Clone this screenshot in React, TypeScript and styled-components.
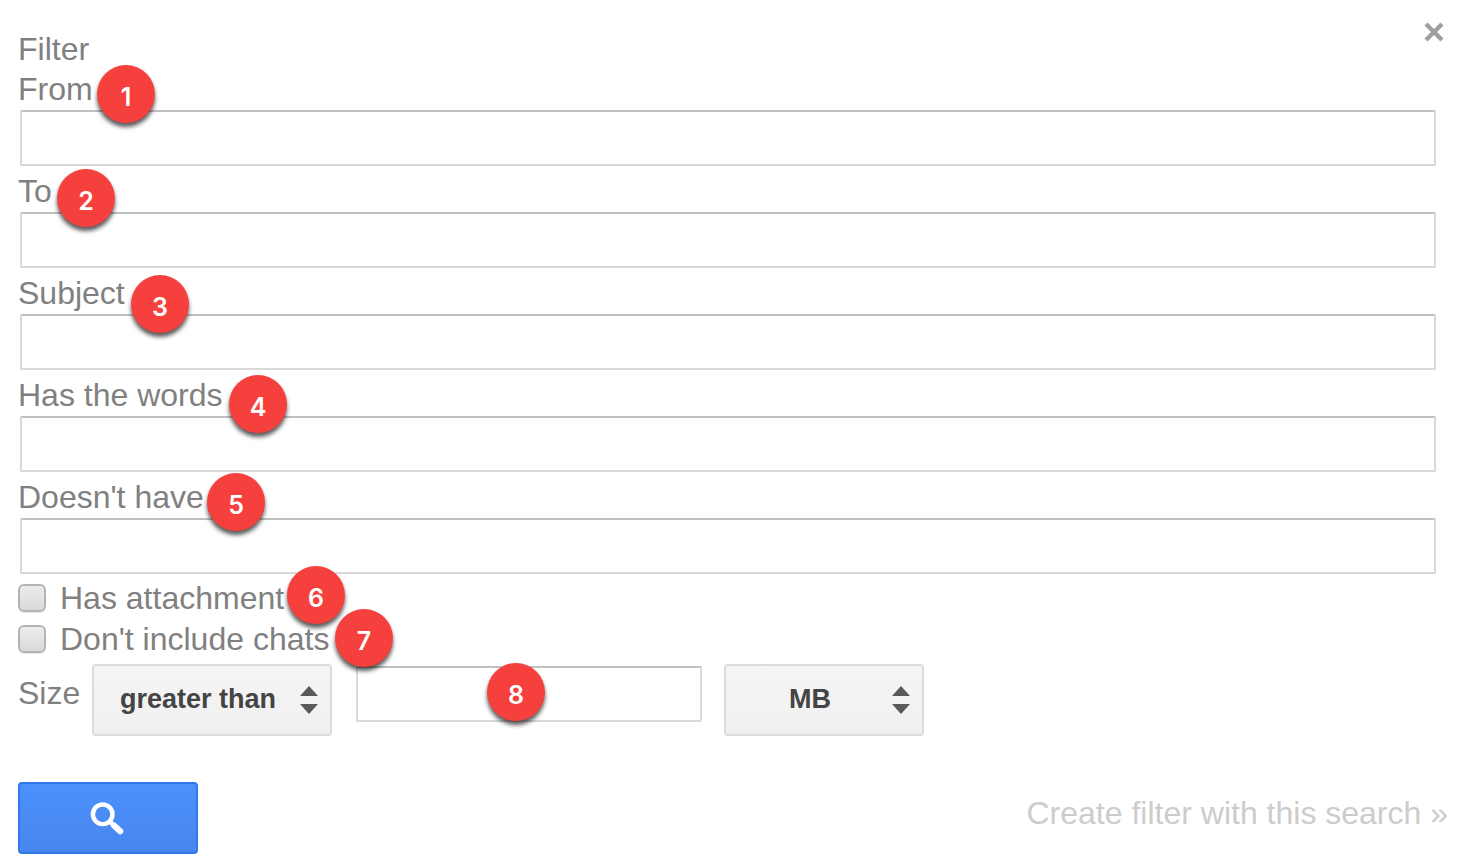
import React from "react";
import styled, { createGlobalStyle } from "styled-components";

const GlobalStyle = createGlobalStyle`
  *, *::before, *::after { box-sizing: border-box; }
  body {
    margin: 0;
    background: #fff;
    color: #808080;
    font-family: "Liberation Sans", Arial, Helvetica, sans-serif;
    font-size: 32px;
    line-height: 40px;
  }
  input, select, button { font: inherit; color: inherit; }
`;

const Panel = styled.form`
  padding: 18px 18px 14px;
`;

const Header = styled.header`
  display: flex;
  align-items: flex-start;
  justify-content: space-between;
`;

const Title = styled.h1`
  margin: 11px 0 0;
  font-size: 32px;
  line-height: 40px;
  font-weight: 400;
`;

const CloseButton = styled.button`
  display: flex;
  padding: 0;
  border: 0;
  background: none;
  cursor: pointer;
`;

const Fields = styled.div`
  display: flex;
  flex-direction: column;
  gap: 5px;
`;

const Field = styled.div`
  position: relative;
  display: flex;
  flex-direction: column;
  gap: 1px;
`;

const TextInput = styled.input`
  height: 56px;
  min-width: 0;
  padding: 0 12px;
  border: 2px solid #d9d9d9;
  border-top-color: #c0c0c0;
  border-radius: 2px;
  background: #fff;
  color: #333;
`;

const FieldInput = styled(TextInput)`
  margin: 0 12px 0 2px;
`;

const Checks = styled.div`
  display: flex;
  flex-direction: column;
  gap: 1px;
  margin-top: 4px;
`;

const CheckRow = styled.div`
  position: relative;
  display: flex;
  align-items: center;
  gap: 14px;
`;

const Checkbox = styled.input`
  appearance: none;
  width: 28px;
  height: 28px;
  margin: 0;
  border: 2px solid #b4b4b4;
  border-radius: 6px;
  background: linear-gradient(#ececec, #dadada);
  box-shadow: 0 1px 1px rgba(0, 0, 0, 0.1);

  &:checked {
    background: #777;
  }
`;

const SizeRow = styled.div`
  display: flex;
  align-items: flex-start;
  margin-top: 5px;
`;

const SizeLabel = styled.label`
  width: 74px;
  line-height: 58px;
`;

const SelectBox = styled.div<{ $width: number }>`
  position: relative;
  width: ${(p) => p.$width}px;
`;

const Select = styled.select`
  appearance: none;
  display: block;
  width: 100%;
  height: 72px;
  padding: 0 28px 2px 0;
  border: 2px solid #dcdcdc;
  border-radius: 4px;
  background: linear-gradient(#f5f5f5, #f0f0f0);
  color: #444;
  font-size: 27px;
  font-weight: 700;
  text-align: center;
  text-align-last: center;
`;

const SelectArrows = styled.svg`
  position: absolute;
  top: 22px;
  right: 13px;
  pointer-events: none;
`;

const AmountBox = styled.div`
  position: relative;
  display: flex;
  width: 346px;
  margin: 2px 22px 0 24px;
`;

const AmountInput = styled(TextInput)`
  flex: 1;
`;

const Footer = styled.footer`
  display: flex;
  align-items: flex-start;
  justify-content: space-between;
  margin-top: 46px;
`;

const SearchButton = styled.button`
  display: flex;
  align-items: center;
  justify-content: center;
  width: 180px;
  height: 72px;
  padding: 0;
  border: 2px solid #3079ed;
  border-radius: 4px;
  background: linear-gradient(#4d90fe, #4787ed);
  cursor: pointer;
`;

const CreateLink = styled.a`
  color: #ccc;
  line-height: 62px;
  text-decoration: none;
`;

const Badge = styled.span<{ $left: number; $top: number }>`
  position: absolute;
  z-index: 1;
  left: ${(p) => p.$left}px;
  top: ${(p) => p.$top}px;
  width: 58px;
  height: 58px;
  padding-top: 4px;
  border-radius: 50%;
  background: #f6403d;
  box-shadow: 0 4px 4px rgba(0, 0, 0, 0.65);
  color: #fff;
  font-family: Inter, "Liberation Sans", sans-serif;
  font-size: 25px;
  font-weight: 600;
  line-height: 56px;
  text-align: center;
  pointer-events: none;
`;

const fields = [
  { id: "from", label: "From", left: 79, top: -4 },
  { id: "to", label: "To", left: 39, top: -2 },
  { id: "subject", label: "Subject", left: 113, top: 2 },
  { id: "has-words", label: "Has the words", left: 211, top: 0 },
  { id: "not-have", label: "Doesn't have", left: 189, top: -4 },
];

const checks = [
  { id: "attachment", label: "Has attachment", left: 269, top: -12 },
  { id: "no-chats", label: "Don't include chats", left: 317, top: -10 },
];

function Arrows() {
  return (
    <SelectArrows width="20" height="28" viewBox="0 0 20 28" aria-hidden="true">
      <path d="M10 0 19 10H1ZM1 18H19L10 28Z" fill="#5a5a5a" />
    </SelectArrows>
  );
}

export default function App() {
  return (
    <>
      <GlobalStyle />
      <Panel onSubmit={(e) => e.preventDefault()}>
        <Header>
          <Title>Filter</Title>
          <CloseButton type="button" aria-label="Close">
            <svg width="28" height="28" viewBox="0 0 28 28" aria-hidden="true">
              <path d="M6 6 22 22M22 6 6 22" stroke="#a0a0a0" strokeWidth="4.5" />
            </svg>
          </CloseButton>
        </Header>

        <Fields>
          {fields.map((f, i) => (
            <Field key={f.id}>
              <label htmlFor={f.id}>{f.label}</label>
              <FieldInput id={f.id} type="text" />
              <Badge $left={f.left} $top={f.top}>{i + 1}</Badge>
            </Field>
          ))}
        </Fields>

        <Checks>
          {checks.map((c, i) => (
            <CheckRow key={c.id}>
              <Checkbox id={c.id} type="checkbox" />
              <label htmlFor={c.id}>{c.label}</label>
              <Badge $left={c.left} $top={c.top}>{i + 6}</Badge>
            </CheckRow>
          ))}
        </Checks>

        <SizeRow>
          <SizeLabel htmlFor="amount">Size</SizeLabel>
          <SelectBox $width={240}>
            <Select aria-label="Size comparison" defaultValue="greater">
              <option value="greater">greater than</option>
              <option value="less">less than</option>
            </Select>
            <Arrows />
          </SelectBox>
          <AmountBox>
            <AmountInput id="amount" type="text" />
            <Badge $left={131} $top={-3}>8</Badge>
          </AmountBox>
          <SelectBox $width={200}>
            <Select aria-label="Size unit" defaultValue="MB">
              <option>MB</option>
              <option>KB</option>
              <option>Bytes</option>
            </Select>
            <Arrows />
          </SelectBox>
        </SizeRow>

        <Footer>
          <SearchButton type="submit" aria-label="Search">
            <svg width="36" height="36" viewBox="0 0 36 36" fill="none" stroke="#fff" aria-hidden="true">
              <circle cx="12.7" cy="14.3" r="9.8" strokeWidth="4.4" />
              <path d="M19.5 21.5 24 25.5" strokeWidth="4.5" />
              <path d="M24 25.5 30.3 31.3" strokeWidth="6" strokeLinecap="round" />
            </svg>
          </SearchButton>
          <CreateLink href="#create-filter">Create filter with this search »</CreateLink>
        </Footer>
      </Panel>
    </>
  );
}
